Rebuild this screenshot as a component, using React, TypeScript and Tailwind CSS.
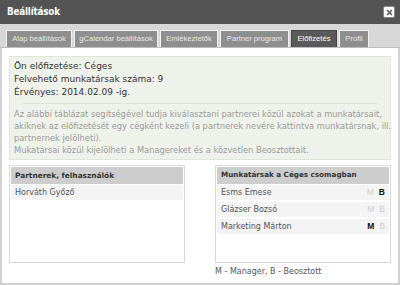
import React from "react";

const tabs = [
  { label: "Alap beállítások", w: "w-[66px]" },
  { label: "gCalendar beállítások", w: "w-[84px]" },
  { label: "Emlékeztetők", w: "w-[58px]" },
  { label: "Partner program", w: "w-[69px]" },
  { label: "Előfizetés", w: "w-[46px]", active: true },
  { label: "Profil", w: "w-[30px]" },
];

const staff = [
  { name: "Esms Emese", m: false, b: true },
  { name: "Glázser Bozsó", m: false, b: false },
  { name: "Marketing Márton", m: true, b: false },
];

const App = () => {
  return (
    <div className="w-[400px] h-[285px] bg-white flex flex-col overflow-hidden font-['DejaVu_Sans',sans-serif]">
      {/* Title bar */}
      <div className="h-[24px] bg-[#545454] flex items-center justify-between pl-[7px] pr-[5px]">
        <span className="text-white font-bold text-[9.8px] font-['DejaVu_Sans_Condensed','DejaVu_Sans',sans-serif] tracking-[-0.2px]">Beállítások</span>
        <span className="w-[12px] h-[12px] bg-white rounded-[2px] flex items-center justify-center border border-[#888]">
          <svg width="7" height="7" viewBox="0 0 7 7">
            <path d="M1 1L6 6M6 1L1 6" stroke="#555" strokeWidth="1.5" />
          </svg>
        </span>
      </div>

      {/* Tabs */}
      <div className="h-[24px] bg-[#d7d7d7] flex items-end gap-[2px] pl-[6px] border-b border-[#bdbdbd]">
        {tabs.map((t) => (
          <div
            key={t.label}
            className={`${t.w} h-[17px] flex items-center justify-center whitespace-nowrap text-[7.6px] font-['Liberation_Sans',sans-serif] border border-b-0 ${
              t.active
                ? "bg-[#5a5a5a] text-white border-[#444]"
                : "bg-[#8e8e8e] text-[#e8e8e8] border-[#f2f2f2]"
            }`}
          >
            {t.label}
          </div>
        ))}
      </div>

      {/* Body */}
      <div className="flex-1 border-x-2 border-b-2 border-[#d2d2d2] px-[7px] pt-[8px]">
        <div className="bg-[#eff2ea] border border-[#dfe5d8] px-[4px] pt-[3px] pb-[3px]">
          <div className="text-[9px] leading-[13px] text-[#333]">
            <div>Ön előfizetése: Céges</div>
            <div>Felvehető munkatársak száma: 9</div>
            <div>Érvényes: 2014.02.09 -ig.</div>
          </div>
          <div className="h-px bg-[#dde3d6] mx-[8px] my-[4px]" />
          <div className="text-[8.3px] leading-[12px] text-[#9a9a9a] whitespace-nowrap">
            <div>Az alábbi táblázat segítségével tudja kiválasztani partnerei közül azokat a munkatársait,</div>
            <div>akiknek az előfizetését egy cégként kezeli (a partnerek nevére kattintva munkatársnak, ill.</div>
            <div>partnernek jelölheti).</div>
            <div>Mukatársai közül kijelölheti a Managereket és a közvetlen Beosztottait.</div>
          </div>
        </div>

        <div className="flex justify-between mt-[5px]">
          {/* Partners */}
          <div className="w-[176px] h-[98px] border border-[#d8d8d8] bg-white p-px">
            <div className="h-[17px] bg-[#cdcdcd] flex items-center px-[4px] text-[7.4px] font-bold text-[#333]">
              Partnerek, felhasználók
            </div>
            <div className="mt-px h-[15px] bg-[#f4f4f4] flex items-center px-[4px] text-[8px] text-[#555]">
              Horváth Győző
            </div>
          </div>

          {/* Staff */}
          <div className="flex flex-col">
            <div className="w-[176px] h-[98px] border border-[#d8d8d8] bg-white p-px">
              <div className="h-[17px] bg-[#cdcdcd] flex items-center px-[4px] text-[7.2px] font-bold text-[#333]">
                Munkatársak a Céges csomagban
              </div>
              <div className="flex flex-col gap-[2px] mt-px">
                {staff.map((s) => (
                  <div key={s.name} className="h-[15px] bg-[#f4f4f4] flex items-center justify-between px-[4px] text-[8px] text-[#555]">
                    <span>{s.name}</span>
                    <span className="flex gap-[5px] font-['Liberation_Sans',sans-serif] text-[8.5px]">
                      <span className={s.m ? "font-bold text-[#111]" : "text-[#ccc]"}>M</span>
                      <span className={s.b ? "font-bold text-[#111]" : "text-[#ccc]"}>B</span>
                    </span>
                  </div>
                ))}
              </div>
            </div>
            <div className="mt-[3px] text-[8px] text-[#555]">M - Manager, B - Beosztott</div>
          </div>
        </div>
      </div>
    </div>
  );
};

export default App;
